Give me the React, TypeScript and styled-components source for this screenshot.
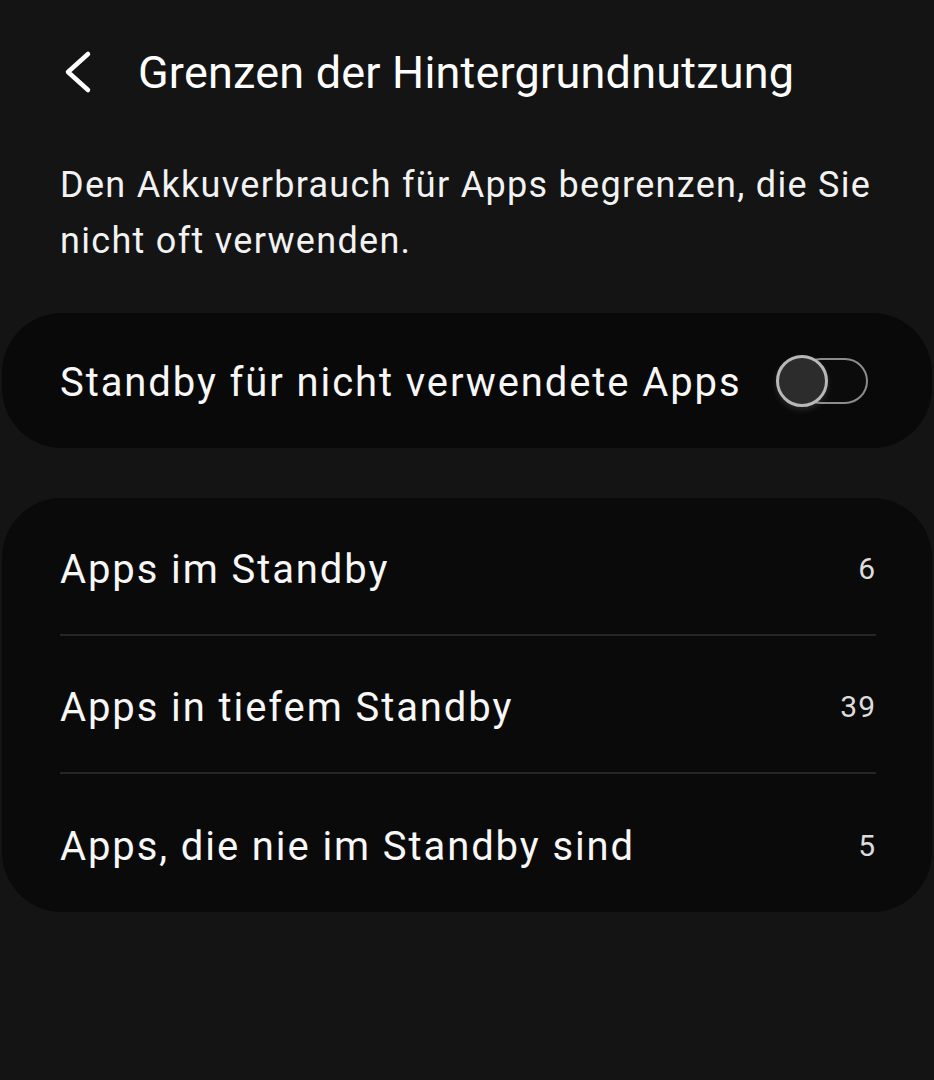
import React from 'react'
import styled, { createGlobalStyle } from 'styled-components'

const GlobalStyle = createGlobalStyle`
  html, body {
    margin: 0;
    padding: 0;
    background: #141414;
  }
  body {
    font-family: Roboto, "Noto Sans", "Liberation Sans", sans-serif;
    color: #f5f5f5;
  }
`

interface Item {
  label: string
  count: number
}

const items: Item[] = [
  { label: 'Apps im Standby', count: 6 },
  { label: 'Apps in tiefem Standby', count: 39 },
  { label: 'Apps, die nie im Standby sind', count: 5 },
]

const App: React.FC = () => {
  return (
    <>
      <GlobalStyle />
      <Page>
        <Header>
          <BackButton aria-label="Zurück">
            <svg width="32" height="44" viewBox="0 0 32 44" fill="none">
              <path
                d="M28 4 L8 22 L28 40"
                stroke="#ffffff"
                strokeWidth="4.5"
                strokeLinecap="round"
                strokeLinejoin="round"
              />
            </svg>
          </BackButton>
          <Title>Grenzen der Hintergrundnutzung</Title>
        </Header>

        <Description>
          Den Akkuverbrauch für Apps begrenzen, die Sie
          <br />
          nicht oft verwenden.
        </Description>

        <SwitchCard>
          <SwitchLabel>Standby für nicht verwendete Apps</SwitchLabel>
          <Toggle>
            <Track />
            <Knob />
          </Toggle>
        </SwitchCard>

        <ListCard>
          {items.map((item, i) => (
            <Row key={item.label} $last={i === items.length - 1}>
              <RowLabel>{item.label}</RowLabel>
              <Count>{item.count}</Count>
            </Row>
          ))}
        </ListCard>
      </Page>
    </>
  )
}

const Page = styled.div`
  width: 934px;
  min-height: 1080px;
  background: #141414;
  display: flex;
  flex-direction: column;
`

const Header = styled.div`
  height: 144px;
  display: flex;
  align-items: center;
  padding-left: 60px;
  gap: 42px;
`

const BackButton = styled.div`
  width: 36px;
  height: 44px;
  display: flex;
  align-items: center;
`

const Title = styled.h1`
  margin: 0;
  font-size: 45px;
  font-weight: 400;
  color: #ffffff;
  letter-spacing: 0.2px;
`

const Description = styled.p`
  margin: 13px 0 0;
  padding: 0 20px 0 60px;
  font-size: 36px;
  line-height: 56px;
  letter-spacing: 1.3px;
  color: #f2f2f2;
  white-space: nowrap;
`

const SwitchCard = styled.div`
  margin: 44px 2px 0;
  height: 135px;
  border-radius: 60px;
  background: #090909;
  display: flex;
  align-items: center;
  justify-content: space-between;
  padding: 0 64px 0 58px;
`

const SwitchLabel = styled.span`
  padding-top: 4px;
  font-size: 40px;
  letter-spacing: 1.9px;
  color: #f7f7f7;
  white-space: nowrap;
`

const Toggle = styled.div`
  position: relative;
  width: 92px;
  height: 52px;
  flex-shrink: 0;
`

const Track = styled.div`
  position: absolute;
  right: 0;
  top: 3px;
  width: 70px;
  height: 46px;
  box-sizing: border-box;
  border: 2.5px solid #8c8c8c;
  border-radius: 23px;
  background: #0b0b0b;
`

const Knob = styled.div`
  position: absolute;
  left: 0;
  top: 0;
  width: 52px;
  height: 52px;
  box-sizing: border-box;
  border-radius: 50%;
  border: 3px solid #b8b8b8;
  background: #2c2c2c;
  box-shadow: 0 3px 6px rgba(255, 255, 255, 0.12);
`

const ListCard = styled.div`
  margin: 50px 2px 0;
  border-radius: 60px;
  background: #0a0a0a;
  display: flex;
  flex-direction: column;
`

const Row = styled.div<{ $last: boolean }>`
  margin: 0 56px 0 58px;
  height: 138px;
  box-sizing: border-box;
  display: flex;
  align-items: center;
  justify-content: space-between;
  padding-top: 4px;
  border-bottom: ${({ $last }) => ($last ? 'none' : '2px solid #262626')};
`

const RowLabel = styled.span`
  padding-top: 2px;
  font-size: 40px;
  letter-spacing: 1.9px;
  color: #f7f7f7;
  white-space: nowrap;
`

const Count = styled.span`
  font-size: 30px;
  letter-spacing: 1px;
  color: #dcdcdc;
`

export default App
